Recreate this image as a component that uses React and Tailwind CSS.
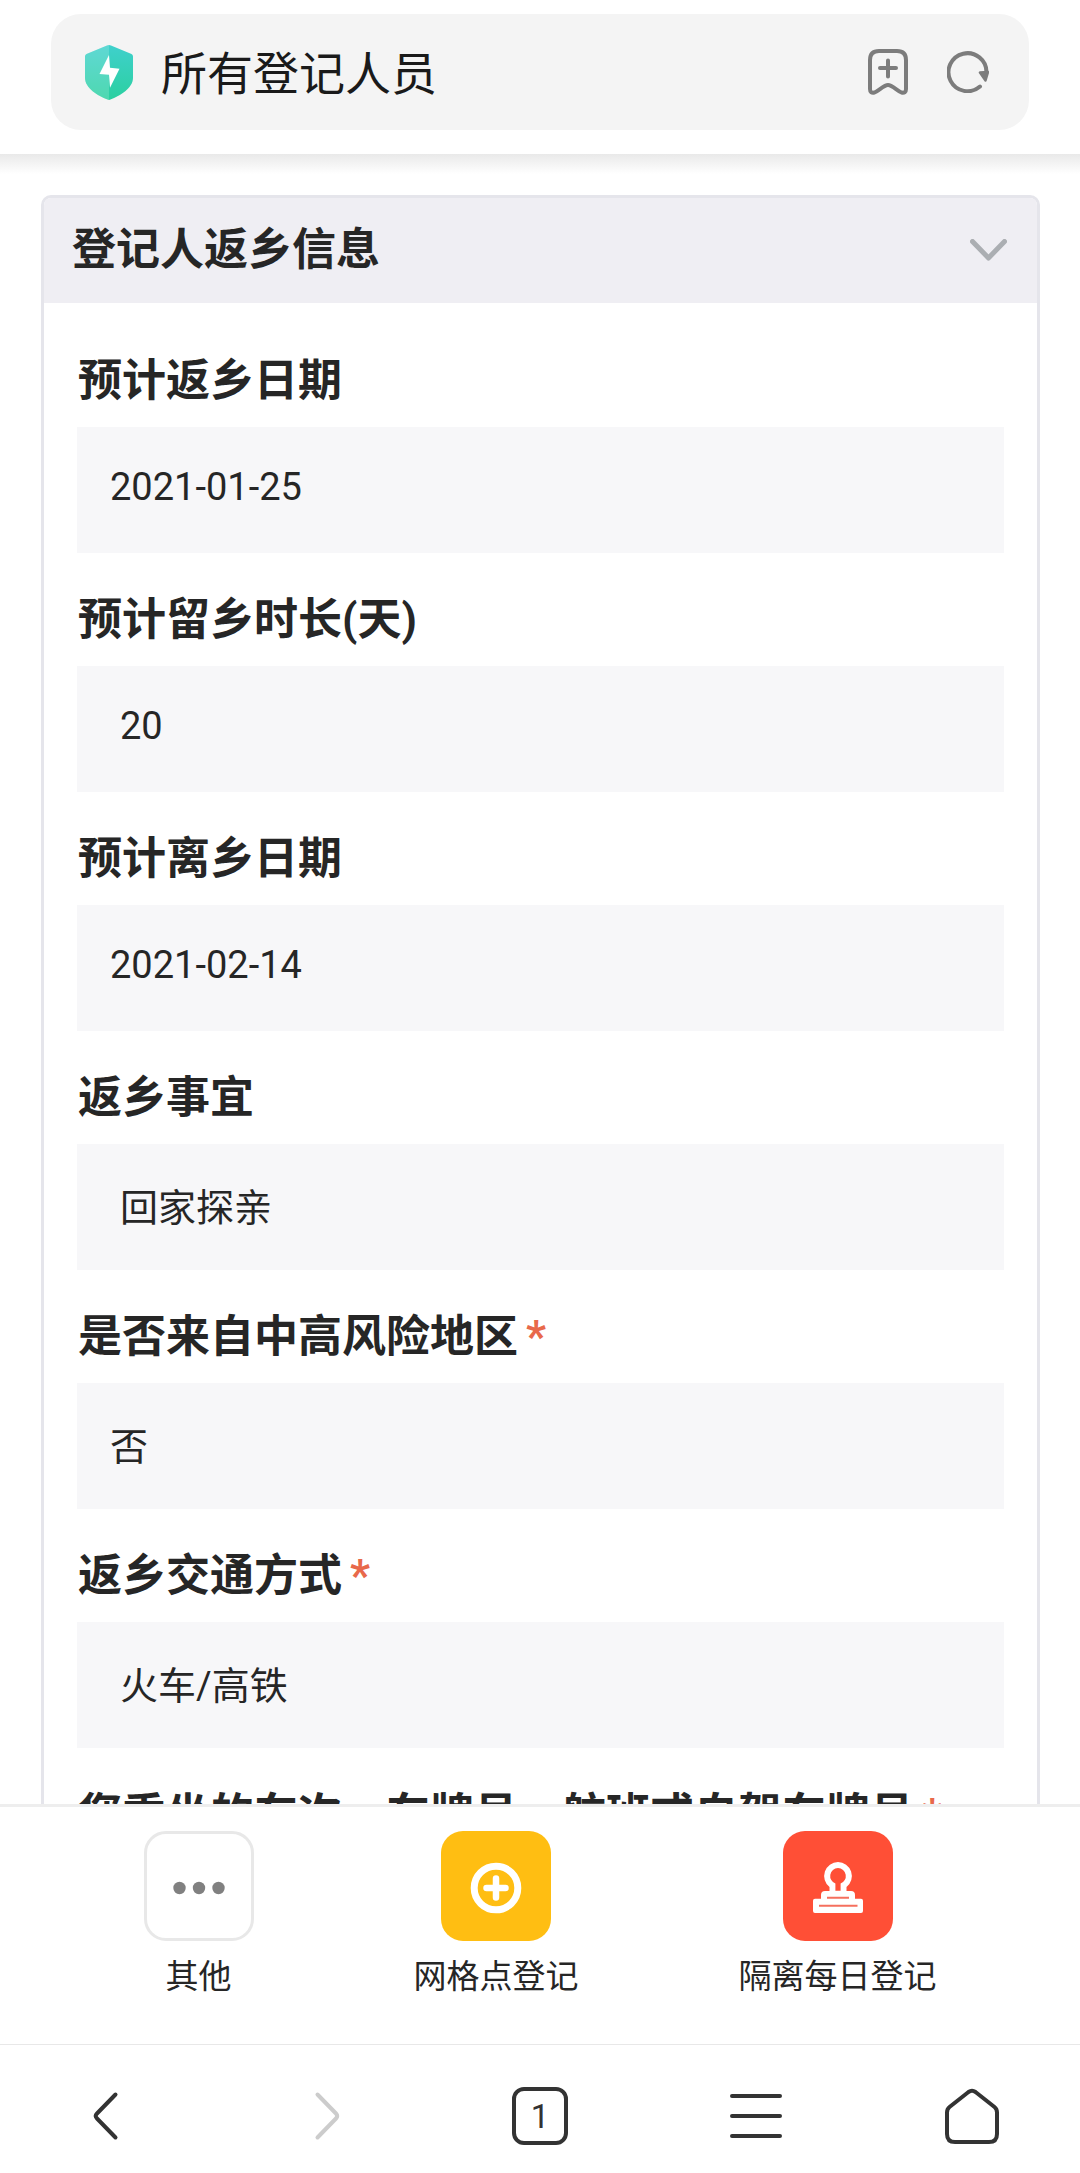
import React, { useState } from 'react';

const fields = [
  { id: 'return-date', label: '预计返乡日期', value: '2021-01-25', type: 'picker' },
  { id: 'stay-days', label: '预计留乡时长(天)', value: '20', type: 'text' },
  { id: 'leave-date', label: '预计离乡日期', value: '2021-02-14', type: 'picker' },
  { id: 'reason', label: '返乡事宜', value: '回家探亲', type: 'text' },
  { id: 'risk-area', label: '是否来自中高风险地区', value: '否', type: 'picker', required: true },
  { id: 'transport', label: '返乡交通方式', value: '火车/高铁', type: 'text', required: true },
  { id: 'plate', label: '您乘坐的车次、车牌号、航班或自驾车牌号', value: '', type: 'text', required: true },
];

const ShieldIcon = () => (
  <svg className="w-12 h-[55px] shrink-0" viewBox="0 0 48 55" aria-hidden="true">
    <defs>
      <linearGradient id="shield" x1="0" y1="0" x2="0" y2="1">
        <stop offset="0" stopColor="#3fd0cc" />
        <stop offset="1" stopColor="#2bd0a0" />
      </linearGradient>
    </defs>
    <path
      d="M22 .5Q24-.4 26 .5L46.5 9Q48 9.8 48 11.500V33C48 43 35 51 25.500 54.600Q24 55.200 22.500 54.600C13 51 0 43 0 33V11.500Q0 9.800 1.500 9Z"
      fill="url(#shield)"
    />
    <path d="M24 0Q23 0 22 .5L1.500 9Q0 9.800 0 11.500V33C0 43 13 51 22.500 54.600Q23.200 54.900 24 54.900Z" fill="#fff" fillOpacity="0.17" />
    <path d="M24 10L14.500 29L24 29.700L25 42.700L34.500 23.700L25 22.700Z" fill="#fff" />
  </svg>
);

const BookmarkIcon = () => (
  <svg className="w-10 h-[46px]" viewBox="0 0 40 46" fill="none" stroke="#7c7c7c" strokeWidth="4" strokeLinecap="round" strokeLinejoin="round" aria-hidden="true">
    <path d="M2 11Q2 2 11 2H29Q38 2 38 11V40Q38 44.500 33.500 43.500C29 41.500 24 36 20 36S11 41.500 6.500 43.500Q2 44.500 2 40Z" />
    <path d="M12 19H28M20 11.500V27.500" />
  </svg>
);

const RefreshIcon = () => (
  <svg className="w-[42px] h-[42px]" viewBox="0 0 42 42" fill="none" aria-hidden="true">
    <path d="M33 35.500A19 19 0 1 1 39.500 21.500" stroke="#7c7c7c" strokeWidth="4" strokeLinecap="round" />
    <path d="M33 21.500L41 21L38.500 29.500Z" fill="#7c7c7c" stroke="#7c7c7c" strokeWidth="2.500" strokeLinejoin="round" />
  </svg>
);

const DotsIcon = () => (
  <svg className="w-[52px] h-[52px]" viewBox="0 0 52 52" fill="#808080" aria-hidden="true">
    <circle cx="6.500" cy="26" r="6.200" />
    <circle cx="26" cy="26" r="6.200" />
    <circle cx="45.500" cy="26" r="6.200" />
  </svg>
);

const PlusCircleIcon = () => (
  <svg className="w-[52px] h-[52px]" viewBox="0 0 52 52" fill="none" stroke="#fff" strokeLinecap="round" aria-hidden="true">
    <circle cx="26" cy="26" r="21.800" strokeWidth="7" />
    <path d="M16.500 26H35.500M26 16.500V35.500" strokeWidth="6.500" />
  </svg>
);

const StampIcon = () => (
  <svg className="w-[52px] h-[52px]" viewBox="-1 0 52 52" aria-hidden="true">
    <path
      d="M25 0A14 14 0 0 1 33.500 25V29H38Q42 29 42 33V36.700H48Q50 36.700 50 38.700V49Q50 51 48 51H2Q0 51 0 49V38.700Q0 36.700 2 36.700H8V33Q8 29 12 29H16.500V25A14 14 0 0 1 25 0Z"
      fill="#fff"
    />
    <path d="M25 6A8 8 0 0 1 27.600 21.500V28.700H22.400V21.500A8 8 0 0 1 25 6Z" fill="#ff4f36" />
    <path d="M14 35.700H36M6 43.800H44.500" stroke="#f5705e" strokeWidth="2" />
  </svg>
);

const actions = [
  { id: 'other', label: '其他', icon: DotsIcon, box: 'border-[3px] border-[#e8e8e8] bg-white' },
  { id: 'grid', label: '网格点登记', icon: PlusCircleIcon, box: 'bg-[#ffbe12]' },
  { id: 'isolation', label: '隔离每日登记', icon: StampIcon, box: 'bg-[#ff4f36]' },
];

const Field = ({ field }) => (
  <div className="flex flex-col">
    <label htmlFor={field.id} className="flex gap-2 mb-4 pl-px text-[44px] leading-[60px] font-bold text-[#262626] whitespace-nowrap">
      {field.label}
      {field.required && <span className="text-[#e8694b]">*</span>}
    </label>
    <input
      id={field.id}
      type="text"
      readOnly
      defaultValue={field.value}
      className={`w-full h-[126px] pb-1.5 bg-[#f7f7f9] text-[38px] leading-[60px] text-[#262626] outline-none ${field.type === 'picker' ? 'px-[33px]' : 'px-[43px]'}`}
    />
  </div>
);

const navIcon = 'w-16 h-16';
const navButton = 'flex-1 flex items-center justify-center';

const BrowserNav = () => (
  <nav className="flex border-t border-[#e8e8e8] pt-[39px] pb-[25px] text-[#333333]">
    <button className={navButton} aria-label="后退">
      <svg className={navIcon} viewBox="0 0 64 64" fill="none" stroke="currentColor" strokeWidth="4" strokeLinecap="round">
        <path d="M39.500 10.500L21 29.500Q18.500 32 21 34.500L39.500 53.500" />
      </svg>
    </button>
    <button className={navButton} aria-label="前进" disabled>
      <svg className={navIcon} viewBox="0 0 64 64" fill="none" stroke="#cccccc" strokeWidth="4" strokeLinecap="round">
        <path d="M25.500 10.500L44 29.500Q46.500 32 44 34.500L25.500 53.500" />
      </svg>
    </button>
    <button className={navButton} aria-label="标签页">
      <span className="w-14 h-[58px] rounded-xl border-4 border-[#333333] flex items-center justify-center text-[33px] leading-none">1</span>
    </button>
    <button className={navButton} aria-label="菜单">
      <svg className={navIcon} viewBox="0 0 64 64" fill="none" stroke="currentColor" strokeWidth="4" strokeLinecap="round">
        <path d="M8 12H56M8 32H56M8 52H56" />
      </svg>
    </button>
    <button className={navButton} aria-label="主页">
      <svg className={navIcon} viewBox="0 0 64 64" fill="none" stroke="currentColor" strokeWidth="4" strokeLinejoin="round">
        <path d="M28.500 8Q32 5.500 35.500 8L54.500 23Q57 25 57 28.500V50Q57 58 49 58H15Q7 58 7 50V28.500Q7 25 9.500 23Z" />
      </svg>
    </button>
  </nav>
);

const App = () => {
  const [open, setOpen] = useState(true);

  return (
    <div className="h-screen flex flex-col overflow-hidden bg-white font-['Roboto','Noto_Sans_CJK_SC',sans-serif]">
      <header className="px-[51px] pt-3.5 pb-6">
        <div className="h-[116px] rounded-[30px] bg-[#f4f4f4] flex items-center pl-[34px] pr-10">
          <ShieldIcon />
          <h1 className="flex-1 ml-7 pt-1 text-[46px] leading-[60px] text-[#1a1a1a] truncate">所有登记人员</h1>
          <div className="flex items-center gap-[39px]">
            <button aria-label="收藏"><BookmarkIcon /></button>
            <button aria-label="刷新"><RefreshIcon /></button>
          </div>
        </div>
      </header>

      <main className="flex-1 min-h-0 overflow-hidden">
        <div className="h-5 bg-gradient-to-b from-[#e9e9e9] to-white" />
        <section className="mt-[21px] ml-[41px] mr-10 rounded-[10px] border-[3px] border-[#e5e5eb] overflow-hidden">
          <button
            onClick={() => setOpen(!open)}
            aria-expanded={open}
            className="w-full h-[105px] pl-7 pr-[30px] pb-0.5 flex items-center justify-between bg-[#efeef3]"
          >
            <span className="text-[44px] leading-[60px] font-bold text-[#262626]">登记人返乡信息</span>
            <svg className="w-[37px] h-[22px]" viewBox="0 0 37 22" fill="none" stroke="#abaeb2" strokeWidth="5" strokeLinecap="round" strokeLinejoin="round" aria-hidden="true">
              <path d="M2.500 2.500L18.500 19L34.500 2.500" />
            </svg>
          </button>
          {open && (
            <div className="flex flex-col gap-[37px] px-[33px] pt-12 pb-9">
              {fields.map((field) => (
                <Field key={field.id} field={field} />
              ))}
            </div>
          )}
        </section>
      </main>

      <footer className="bg-white">
        <div className="flex justify-center gap-40 border-t-[3px] border-[#eeeeee] pt-6 pb-[43px]">
          {actions.map((action) => {
            const Icon = action.icon;
            return (
              <button key={action.id} className="flex flex-col items-center gap-3">
                <span className={`w-[110px] h-[110px] pt-1 rounded-[22px] flex items-center justify-center ${action.box}`}>
                  <Icon />
                </span>
                <span className="text-[33px] leading-[48px] text-[#262626] whitespace-nowrap">{action.label}</span>
              </button>
            );
          })}
        </div>
        <BrowserNav />
      </footer>
    </div>
  );
};

export default App;
